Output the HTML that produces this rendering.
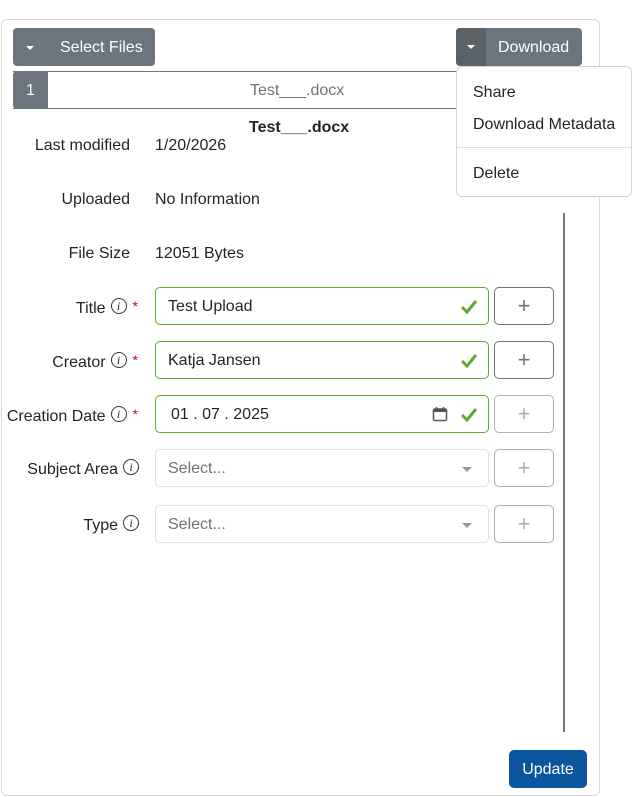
<!DOCTYPE html>
<html><head><meta charset="utf-8"><style>
*{box-sizing:border-box;margin:0;padding:0}
body{width:632px;height:797px;background:#fff;font-family:"Liberation Sans",Arial,sans-serif;font-size:16px;color:#212529;position:relative;overflow:hidden}
.a{position:absolute}
.card{left:1px;top:19px;width:599px;height:777px;border:1px solid #d9d9d9;border-radius:6px}
.btn{background:#6c757d;color:#fff;border-radius:4px;display:flex;align-items:center;padding-top:2px}
.caret{width:0;height:0;border-left:4px solid transparent;border-right:4px solid transparent;border-top:4px solid #fff}
.lbl{right:502px;text-align:right;white-space:nowrap}
.lbl.r{right:494px;line-height:18px}
.lbl.i{line-height:18px}
.inp{left:155px;width:334px;height:38px;border:1px solid #5cad2b;border-radius:5px;padding-left:12px;padding-top:2px;display:flex;align-items:center}
.sel{border-color:#e0e0e0;color:#6c757d}
.plus{left:494px;width:60px;height:38px;border:1px solid #6c757d;border-radius:5px;display:flex;align-items:center;justify-content:center;font-size:22px;color:#6c757d;font-weight:300}
.plus.d{border-color:#aab0b5;color:#aab0b5}
.info{display:inline-block;width:16px;height:16px;border:1px solid #333;border-radius:50%;font-size:12px;line-height:14px;text-align:center;font-style:italic;font-family:"Liberation Serif",serif;vertical-align:3px;margin-left:5px}
.req{color:#d0021b;margin-left:6px;font-size:14px;vertical-align:2px}
.chk{position:absolute;right:10px;top:11px}
.dd{position:absolute;right:16px;top:17px;width:0;height:0;border-left:5px solid transparent;border-right:5px solid transparent;border-top:5px solid #999}
</style></head><body>
<div class="a card"></div>
<div class="a btn" style="left:13px;top:28px;width:142px;height:38px"><div class="caret" style="margin-left:13px"></div><span style="margin-left:26px">Select Files</span></div>
<div class="a btn" style="left:456px;top:28px;width:126px;height:38px;overflow:hidden;padding-top:0"><div style="width:30px;height:38px;background:#5a6268;display:flex;align-items:center;justify-content:center"><div class="caret"></div></div><span style="margin-left:12px;padding-top:2px">Download</span></div>
<div class="a" style="left:13px;top:71px;width:460px;height:38px;border-top:1px solid #6c757d;border-bottom:1px solid #6c757d"></div>
<div class="a" style="left:13px;top:71px;width:35px;height:38px;background:#6c757d;color:#fff;border-radius:4px 0 0 4px;padding:11px 0 0 13px">1</div>
<div class="a" style="left:250px;top:82px;color:#6c757d">Test___.docx</div>
<div class="a" style="left:249px;top:119px;font-weight:bold">Test___.docx</div>
<div class="a" style="left:456px;top:66px;width:176px;height:131px;border:1px solid #d4d4d4;border-radius:6px;background:#fff">
<div class="a" style="left:16px;top:17px">Share</div>
<div class="a" style="left:16px;top:49px">Download Metadata</div>
<div class="a" style="left:0;top:80px;width:174px;border-top:1px solid #ddd"></div>
<div class="a" style="left:16px;top:98px">Delete</div>
</div>
<div class="a" style="left:563px;top:213px;width:1.5px;height:519px;background:#777"></div>
<div class="a lbl" style="top:137px">Last modified</div><div class="a" style="left:155px;top:137px">1/20/2026</div>
<div class="a lbl" style="top:191px">Uploaded</div><div class="a" style="left:155px;top:191px">No Information</div>
<div class="a lbl" style="top:245px">File Size</div><div class="a" style="left:155px;top:245px">12051 Bytes</div>

<div class="a lbl r" style="top:297px">Title<span class="info">i</span><span class="req">*</span></div>
<div class="a inp" style="top:287px">Test Upload<svg class="chk" width="18" height="16" viewBox="0 0 18 16"><path d="M2 8l5 5 9-11" stroke="#5cad2b" stroke-width="3" fill="none"/></svg></div>
<div class="a plus" style="top:287px">+</div>

<div class="a lbl r" style="top:351px">Creator<span class="info">i</span><span class="req">*</span></div>
<div class="a inp" style="top:341px">Katja Jansen<svg class="chk" width="18" height="16" viewBox="0 0 18 16"><path d="M2 8l5 5 9-11" stroke="#5cad2b" stroke-width="3" fill="none"/></svg></div>
<div class="a plus" style="top:341px">+</div>

<div class="a lbl r" style="top:405px">Creation Date<span class="info">i</span><span class="req">*</span></div>
<div class="a inp" style="top:395px;padding-left:15px">01 . 07 . 2025<svg style="position:absolute;right:40px;top:10px" width="16" height="16" viewBox="0 0 16 16"><rect x="1.5" y="3" width="13" height="11.5" rx="1.5" stroke="#555" stroke-width="1.5" fill="none"/><rect x="1.5" y="3" width="13" height="3" fill="#555"/><path d="M4.5 1v3M11.5 1v3" stroke="#555" stroke-width="1.5"/></svg><svg class="chk" width="18" height="16" viewBox="0 0 18 16"><path d="M2 8l5 5 9-11" stroke="#5cad2b" stroke-width="3" fill="none"/></svg></div>
<div class="a plus d" style="top:395px">+</div>

<div class="a lbl i" style="top:459px;right:493px">Subject Area<span class="info">i</span></div>
<div class="a inp sel" style="top:449px">Select...<div class="dd"></div></div>
<div class="a plus d" style="top:449px">+</div>

<div class="a lbl i" style="top:515px;right:493px">Type<span class="info">i</span></div>
<div class="a inp sel" style="top:505px">Select...<div class="dd"></div></div>
<div class="a plus d" style="top:505px">+</div>

<div class="a" style="left:509px;top:750px;width:78px;height:38px;background:#0b559e;color:#fff;border-radius:5px;display:flex;align-items:center;justify-content:center;padding-top:2px">Update</div>
</body></html>
